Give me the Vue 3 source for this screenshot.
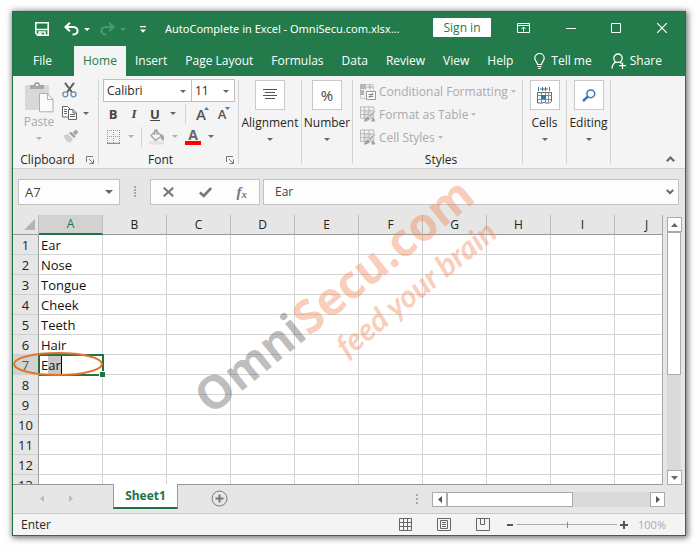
<script setup>
import { ref } from 'vue'

const menus = ['Insert', 'Page Layout', 'Formulas', 'Data', 'Review', 'View', 'Help']
const columns = ['A', 'B', 'C', 'D', 'E', 'F', 'G', 'H', 'I', 'J']
const names = ['Ear', 'Nose', 'Tongue', 'Cheek', 'Teeth', 'Hair']
const rows = Array.from({ length: 13 }, (_, i) => i + 1)
const activeRow = 7
const cellName = ref('A7')
const formula = ref('Ear')
const zoom = ref(50)
</script>

<template>
  <div class="desk">
    <main class="window">
      <header class="titlebar">
        <div class="quick">
          <button class="bare save" aria-label="Save">
            <svg width="14" height="14" viewBox="0 0 14 14" fill="none" stroke="#fff" stroke-width="1.6"><path d="M.8.8h12.4v12.4H2.8l-2-2zM.8 7.5h12.4" /><path d="M4 13v-3h6v3" /><path d="M6 11v2" /></svg>
          </button>
          <button class="bare undo" aria-label="Undo">
            <svg width="15" height="14" viewBox="0 0 15 14" fill="none" stroke="#fff" stroke-width="2"><path d="M6 .8 1.4 5 6 9.2M1.6 5H9q4.6.3 4.6 4Q13.400 12.400 8.500 12.600" /></svg>
          </button>
          <button class="bare more" aria-label="Undo list"><svg width="6" height="3" viewBox="0 0 6 3"><path d="M0 0h6L3 3z" fill="#fff" /></svg></button>
          <button class="bare redo" aria-label="Redo" disabled>
            <svg width="15" height="14" viewBox="0 0 15 14" fill="none" stroke="#4d9a70" stroke-width="2"><path d="M9 .8 13.600 5 9 9.200M13.400 5H6Q1.400 5.300 1.400 9q.2 3.400 5 3.600" /></svg>
          </button>
          <button class="bare more" aria-label="Redo list" disabled><svg width="6" height="3" viewBox="0 0 6 3"><path d="M0 0h6L3 3z" fill="#4d9a70" /></svg></button>
          <button class="bare custom" aria-label="Customize toolbar"><svg width="6" height="7" viewBox="0 0 6 7"><path d="M0 0h6v1.300H0zM0 3.500h6L3 6.700z" fill="#fff" /></svg></button>
        </div>
        <h1>AutoComplete in Excel - OmniSecu.com.xlsx...</h1>
        <button class="signin">Sign in</button>
        <div class="controls">
          <button class="bare" aria-label="Ribbon display options"><svg width="13" height="10" viewBox="0 0 13 10" fill="none" stroke="#fff"><path d="M.5.5h12v9H.5zM.5 2.500h12M6.500 8.500V4M4.500 6l2-2 2 2" /></svg></button>
          <button class="bare" aria-label="Minimize"><svg width="10" height="10" viewBox="0 0 10 10" stroke="#fff"><path d="M0 5.500h10" /></svg></button>
          <button class="bare" aria-label="Maximize"><svg width="10" height="10" viewBox="0 0 10 10" fill="none" stroke="#fff"><path d="M.5.5h9v9h-9z" /></svg></button>
          <button class="bare" aria-label="Close"><svg width="10" height="10" viewBox="0 0 10 10" stroke="#fff" stroke-width="1.200"><path d="m0 0 10 10M10 0 0 10" /></svg></button>
        </div>
      </header>

      <nav class="tabs">
        <button class="tab file">File</button>
        <button class="tab home">Home</button>
        <button v-for="m in menus" :key="m" class="tab">{{ m }}</button>
        <button class="tab tell">
          <svg width="11" height="16" viewBox="0 0 11 16" fill="none" stroke="#fff" stroke-width="1.200"><path d="M3.500 11.500C3.500 9 .8 8 .8 5.200a4.700 4.700 0 0 1 9.400 0C10.200 8 7.500 9 7.500 11.500zM3.500 13.500h4M4.300 15.400h2.400" /></svg>
          Tell me
        </button>
        <button class="tab share">
          <svg width="16" height="17" viewBox="0 0 16 17" fill="none" stroke="#fff" stroke-width="1.300"><circle cx="7" cy="5.200" r="4.200" /><path d="M1 15.500c.2-4 1.600-5.500 4-6.500M9 9l1.500 1.500M11.500 9.500V16M8.200 12.700h6.800" /></svg>
          Share
        </button>
      </nav>

      <section class="ribbon">
        <div class="group clipboard">
          <div class="paste-area">
            <button class="bare paste" disabled>
              <svg width="29" height="31" viewBox="0 0 29 31"><path d="M0 3h24v25H0z" fill="#d9d7d9" /><path d="M5 7V3h4q0-3 3-3t3 3h4v4z" fill="#a7a7a7" /><path d="M11 2h2v2h-2z" fill="#f4f4f4" /><path d="M14.500 11.500h8l5.500 6v12.300H14.500z" fill="#fafafa" stroke="#b0b0b0" /><path d="M22.500 11.500v6H28" fill="none" stroke="#b0b0b0" /></svg>
              <span>Paste</span>
              <svg class="caret faint" width="6" height="3" viewBox="0 0 6 3"><path d="M0 0h6L3 3z" /></svg>
            </button>
            <div class="stack">
              <button class="bare" aria-label="Cut"><svg width="15" height="16" viewBox="0 0 15 16" fill="none"><path d="m3 .8 6.800 9.200M12 .8 5.200 10" stroke="#606060" stroke-width="2" /><circle cx="3.300" cy="12.300" r="2.500" stroke="#6b8cae" stroke-width="1.300" /><circle cx="11.500" cy="12.300" r="2.500" stroke="#6b8cae" stroke-width="1.300" /></svg></button>
              <span class="pair">
                <button class="bare" aria-label="Copy"><svg width="15" height="15" viewBox="0 0 15 15" fill="#fff" stroke="#666"><path d="M.5.5h5l2.500 2.500v8H.5zM2 3.500h3M2 5.500h3M2 7.500h3" /><path d="M6.500 3.500H11l3.500 3.500v6.500h-8z" /><path d="M11 3.500V7h3M8 8.500h5M8 10.500h5" fill="none" /></svg></button>
                <button class="bare" aria-label="Copy options"><svg class="caret" width="6" height="3" viewBox="0 0 6 3"><path d="M0 0h6L3 3z" /></svg></button>
              </span>
              <button class="bare" aria-label="Format painter" disabled><svg width="17" height="14" viewBox="0 0 17 14"><path d="M1 6.500 6 5l5 5-3 4-2-2v2z" fill="#cfcfcf" /><path d="m7 4 1.800-1.200 4.800 4.800L12 9z" fill="#999" /><path d="m10.500 3.500 3.500-3 2.500 2.500-3 3.500z" fill="#a8a8a8" /></svg></button>
            </div>
          </div>
          <div class="caption"><span>Clipboard</span>
            <button class="bare launch" aria-label="Clipboard settings"><svg width="8" height="8" viewBox="0 0 8 8" fill="none" stroke="#777"><path d="M.5 6V.5H7M3 3l4 4M7.500 3.500v4h-4" /></svg></button>
          </div>
        </div>

        <div class="group font">
          <div class="selects">
            <label class="pick name"><select aria-label="Font name"><option>Calibri</option></select><svg class="caret" width="6" height="3" viewBox="0 0 6 3"><path d="M0 0h6L3 3z" /></svg></label>
            <label class="pick size"><select aria-label="Font size"><option>11</option></select><svg class="caret" width="6" height="3" viewBox="0 0 6 3"><path d="M0 0h6L3 3z" /></svg></label>
          </div>
          <div class="tools first">
            <button class="bare letter">B</button>
            <button class="bare letter it">I</button>
            <button class="bare letter un">U</button>
            <button class="bare" aria-label="Underline options"><svg class="caret" width="6" height="3" viewBox="0 0 6 3"><path d="M0 0h6L3 3z" /></svg></button>
            <i class="rule"></i>
            <button class="bare sized big" aria-label="Increase font size">A<svg width="5" height="3" viewBox="0 0 5 3"><path d="M0 3h5L2.500 0z" fill="#3a7fc0" /></svg></button>
            <button class="bare sized small" aria-label="Decrease font size">A<svg width="5" height="3" viewBox="0 0 5 3"><path d="M0 0h5L2.500 3z" fill="#3a7fc0" /></svg></button>
          </div>
          <div class="tools second">
            <button class="bare" aria-label="Borders" disabled><svg width="14" height="14" viewBox="0 0 14 14" fill="none" stroke="#999"><path d="M.5 0v13M6.500 0v13M12.500 0v13M0 .5h13M0 6.500h13" stroke-dasharray="1 1" /><path d="M0 13.300h13" stroke="#777" /></svg></button>
            <button class="bare" aria-label="Border options" disabled><svg class="caret faint" width="6" height="3" viewBox="0 0 6 3"><path d="M0 0h6L3 3z" /></svg></button>
            <i class="rule"></i>
            <button class="bare" aria-label="Fill color" disabled><svg width="16" height="16" viewBox="0 0 16 16" fill="none" stroke="#a5a5a5" stroke-width="1.300"><path d="M2 6.500 7 2l5.500 5-6 4.500z" fill="#f7f7f7" /><path d="M5.500 6V2Q6 0 8 1v5" /><path d="M12 5.500q3.500 1.500 2 5.500-2-1-2-5.500" fill="#a5a5a5" /><path d="M0 12.500h15v3H0z" fill="#e2e2e2" stroke="none" /></svg></button>
            <button class="bare" aria-label="Fill options" disabled><svg class="caret faint" width="6" height="3" viewBox="0 0 6 3"><path d="M0 0h6L3 3z" /></svg></button>
            <button class="bare ink" aria-label="Font color">A</button>
            <button class="bare" aria-label="Font color options"><svg class="caret" width="6" height="3" viewBox="0 0 6 3"><path d="M0 0h6L3 3z" /></svg></button>
          </div>
          <div class="caption"><span>Font</span>
            <button class="bare launch" aria-label="Font settings"><svg width="8" height="8" viewBox="0 0 8 8" fill="none" stroke="#777"><path d="M.5 6V.5H7M3 3l4 4M7.500 3.500v4h-4" /></svg></button>
          </div>
        </div>

        <button class="group folded">
          <span class="tile"><svg width="14" height="12" viewBox="0 0 14 12" stroke="#555"><path d="M0 .5h14M2 3.500h10M0 6.500h14M2 9.500h10" /></svg></span>
          <span>Alignment</span><svg class="caret" width="6" height="3" viewBox="0 0 6 3"><path d="M0 0h6L3 3z" /></svg>
        </button>
        <button class="group folded">
          <span class="tile percent">%</span>
          <span>Number</span><svg class="caret" width="6" height="3" viewBox="0 0 6 3"><path d="M0 0h6L3 3z" /></svg>
        </button>

        <div class="group styles">
          <button class="bare style" disabled>
            <svg width="16" height="16" viewBox="0 0 16 16" fill="none" stroke="#aaa"><path d="M.5.500h13v14H.5z" fill="#eee" stroke="#ccc" /><path d="M0 0h6v5H0zM0 6h4v5H0z" fill="#b5b5b5" stroke="none" /><path d="M7 3h6M10 0v5" /><path d="M6.500 7.500h9v8h-9z" fill="#fff" stroke="#999" /><path d="M8.500 10.500h5M8.500 12.500h5M12.500 9l-3 5" stroke="#888" /></svg>
            Conditional Formatting<svg class="caret faint" width="5" height="3" viewBox="0 0 6 3"><path d="M0 0h6L3 3z" /></svg>
          </button>
          <button v-for="s in ['Format as Table', 'Cell Styles']" :key="s" class="bare style" disabled>
            <svg width="16" height="17" viewBox="0 0 17 17" fill="none" stroke="#b5b5b5"><path d="M.5.500h14v12H.5z" fill="#f3f3f3" /><path d="M4 4h9v8H4z" fill="#ddd" stroke="none" /><path d="M.5 4.500h14M.5 8.500h14M4.500.500v12M9.500.500v12" /><path d="m15.500 4 1 1.500L11 12l-2-2z" fill="#aaa" stroke="#f4f4f4" stroke-width=".7" /><path d="M4 16q1-5 5-5l1.500 2Q9 16 4 16M12 16l1-5 3 3v2z" fill="#a5a5a5" stroke="none" /></svg>
            {{ s }}<svg class="caret faint" width="5" height="3" viewBox="0 0 6 3"><path d="M0 0h6L3 3z" /></svg>
          </button>
          <div class="caption"><span>Styles</span></div>
        </div>

        <button class="group folded">
          <span class="tile"><svg width="15" height="17" viewBox="0 0 15 17" fill="none" stroke="#666"><path d="M1.500 0v4M12.500 0v4M5.500 0v4M8.500 0v4M3 2h8" stroke="#3a7399" /><path d="M.5 5.500h14v9l-2 1.500H8l-1-1-1 1H.5z" fill="#fff" /><path d="M.5 8.500h14M.5 12.500h14M4.500 5.500V16M8.500 5.500V15M11.500 5.500V15" stroke="#888" /><path d="M4 8h5v4H4z" fill="#2e75a8" stroke="none" /></svg></span>
          <span>Cells</span><svg class="caret" width="6" height="3" viewBox="0 0 6 3"><path d="M0 0h6L3 3z" /></svg>
        </button>
        <button class="group folded">
          <span class="tile"><svg width="14" height="13" viewBox="0 0 14 13" fill="none" stroke="#3f74b5"><circle cx="8.800" cy="4.800" r="3.900" stroke-width="1.500" /><path d="m6 7.500-5 4.500" stroke-width="2.400" /></svg></span>
          <span>Editing</span><svg class="caret" width="6" height="3" viewBox="0 0 6 3"><path d="M0 0h6L3 3z" /></svg>
        </button>
        <div class="tail">
          <button class="bare" aria-label="Collapse ribbon"><svg width="9" height="6" viewBox="0 0 9 6" fill="none" stroke="#666" stroke-width="2"><path d="m.8 5.200 3.700-3.700 3.700 3.700" /></svg></button>
        </div>
      </section>

      <section class="formula-bar">
        <label class="namebox"><input v-model="cellName" aria-label="Name box" /><svg class="caret" width="8" height="4" viewBox="0 0 8 4"><path d="M0 0h8L4 4z" /></svg></label>
        <svg class="grip" width="2" height="12" viewBox="0 0 2 12" fill="#aaa"><path d="M0 0h2v2H0zM0 3h2v2H0zM0 6h2v2H0zM0 9h2v2H0z" /></svg>
        <div class="fx-box">
          <button class="bare" aria-label="Cancel"><svg width="11" height="10" viewBox="0 0 11 10" stroke="#777" stroke-width="2"><path d="m.7.700 9.600 8.600M10.300.7.7 9.300" /></svg></button>
          <button class="bare" aria-label="Accept"><svg width="13" height="11" viewBox="0 0 13 11" fill="none" stroke="#777" stroke-width="2.600"><path d="m.8 5.500 4 3.500L12.200 1" /></svg></button>
          <button class="bare fx" aria-label="Insert function">f<small>x</small></button>
        </div>
        <label class="formula"><input v-model="formula" aria-label="Formula" /><svg width="8" height="6" viewBox="0 0 8 6" fill="none" stroke="#666" stroke-width="2"><path d="m.8 1 3.200 3.200L7.200 1" /></svg></label>
      </section>

      <section class="sheet">
        <div class="grid-view">
          <table>
            <thead>
              <tr>
                <th class="corner"><svg width="11" height="11" viewBox="0 0 11 11"><path d="M11 0v11H0z" fill="#b4b4b4" /></svg></th>
                <th v-for="c in columns" :key="c" :class="{ active: c === 'A' }">{{ c }}</th>
              </tr>
            </thead>
            <tbody>
              <tr v-for="r in rows" :key="r">
                <th :class="{ active: r === activeRow }">{{ r }}
                  <svg v-if="r === activeRow" class="ring" width="90" height="24" viewBox="0 0 90 24"><ellipse cx="45" cy="12" rx="44" ry="11" fill="none" stroke="#e0762a" stroke-width="2" /></svg>
                </th>
                <td v-for="c in columns" :key="c" :class="{ editing: r === activeRow && c === 'A' }">
                  <template v-if="c === 'A' && r === activeRow">E<mark>ar</mark></template>
                  <template v-else-if="c === 'A'">{{ names[r - 1] }}</template>
                </td>
              </tr>
            </tbody>
          </table>
        </div>
        <div class="vscroll">
          <button class="arrow" aria-label="Scroll up"><svg width="7" height="4" viewBox="0 0 7 4"><path d="M0 4h7L3.500 0z" fill="#666" /></svg></button>
          <div class="track"><div class="thumb"></div></div>
          <button class="arrow" aria-label="Scroll down"><svg width="7" height="4" viewBox="0 0 7 4"><path d="M0 0h7L3.500 4z" fill="#666" /></svg></button>
        </div>
      </section>

      <section class="sheetbar">
        <button class="bare prev" aria-label="Previous sheet"><svg width="4" height="7" viewBox="0 0 4 7"><path d="M4 0v7L0 3.500z" fill="#bbb" /></svg></button>
        <button class="bare next" aria-label="Next sheet"><svg width="4" height="7" viewBox="0 0 4 7"><path d="M0 0v7l4-3.500z" fill="#bbb" /></svg></button>
        <button class="sheet-tab">Sheet1</button>
        <button class="bare add" aria-label="New sheet"><svg width="17" height="17" viewBox="0 0 17 17" fill="none" stroke="#777"><circle cx="8.500" cy="8.500" r="7.500" /><path d="M8.500 4.500v8M4.500 8.500h8" stroke-width="2" /></svg></button>
        <svg class="grip" width="2" height="11" viewBox="0 0 2 11" fill="#aaa"><path d="M0 0h2v2H0zM0 4h2v2H0zM0 8h2v2H0z" /></svg>
        <div class="hscroll">
          <button class="arrow" aria-label="Scroll left"><svg width="4" height="7" viewBox="0 0 4 7"><path d="M4 0v7L0 3.500z" fill="#555" /></svg></button>
          <div class="track"><div class="thumb"></div></div>
          <button class="arrow" aria-label="Scroll right"><svg width="4" height="7" viewBox="0 0 4 7"><path d="M0 0v7l4-3.500z" fill="#555" /></svg></button>
        </div>
      </section>

      <footer class="status">
        <span class="mode">Enter</span>
        <div class="views">
          <button class="bare" aria-label="Normal view"><svg width="13" height="13" viewBox="0 0 13 13" fill="none" stroke="#666"><path d="M.5.500h12v12H.5zM4.500.500v12M8.500.500v12M.5 4.500h12M.5 8.500h12" /></svg></button>
          <button class="bare" aria-label="Page layout view"><svg width="14" height="13" viewBox="0 0 14 13" fill="none" stroke="#666"><path d="M.5.500h13v12H.5zM3.500 2.500h7v8h-7zM5 4.500h4M5 6.500h4M5 8.500h4" /></svg></button>
          <button class="bare" aria-label="Page break view"><svg width="14" height="13" viewBox="0 0 14 13" fill="none" stroke="#666"><path d="M.5.500h13v12H.5zM4.500.500v6h4v-6M8.500.500v6" /></svg></button>
        </div>
        <button class="bare" aria-label="Zoom out"><svg width="6" height="8" viewBox="0 0 6 8"><path d="M0 3h6v2H0z" fill="#555" /></svg></button>
        <input v-model="zoom" class="slider" type="range" min="0" max="100" aria-label="Zoom" />
        <button class="bare" aria-label="Zoom in"><svg width="8" height="8" viewBox="0 0 8 8"><path d="M0 3h3V0h2v3h3v2H5v3H3V5H0z" fill="#555" /></svg></button>
        <span class="level">100%</span>
      </footer>
    </main>

    <svg class="watermark" width="330" height="260" viewBox="0 0 330 260" aria-hidden="true">
      <text class="brand" transform="translate(31 246) rotate(-39)"><tspan class="gray">Omni</tspan><tspan>Secu.com</tspan></text>
      <text class="slogan" transform="translate(167 189) rotate(-39)">feed your brain</text>
    </svg>
  </div>
</template>

<style>
body { background: #fdfefd; }
</style>

<style scoped>
* { box-sizing: border-box; }
.desk {
  position: relative;
  min-height: 100vh;
  padding: 11px 14px 16px 12px;
  display: flex;
  font-family: "Open Sans", "Noto Sans", sans-serif;
  font-size: 12px;
  line-height: 16px;
  color: #262626;
}
.window {
  flex: 1;
  min-width: 0;
  height: calc(100vh - 27px);
  display: flex;
  flex-direction: column;
  border: 1px solid #217346;
  background: #e6e6e6;
  box-shadow: 1px 1px 6px 1px rgba(0, 0, 0, 0.55);
}
button, input, select { font: inherit; color: inherit; margin: 0; padding: 0; border: 0; background: none; border-radius: 0; }
svg { display: block; flex: none; }
.bare { display: flex; align-items: center; justify-content: center; }
.caret { fill: #666; }
.caret.faint { fill: #b0b0b0; }

.titlebar { height: 34px; flex: none; display: flex; align-items: center; background: #237b4b; color: #fff; padding: 0 18px 0 22px; }
.quick { display: flex; align-items: center; width: 130px; flex: none; }
.undo { margin-left: 15px; }
.more { margin-left: 5px; }
.redo { margin-left: 10px; }
.custom { margin-left: 14px; }
h1 { font: inherit; font-family: "Noto Sans", sans-serif; font-size: 11px; margin: 0; width: 268px; white-space: nowrap; }
.signin { width: 58px; height: 19px; margin-bottom: 3px; background: #fff; color: #237b4b; border-radius: 1px; line-height: 18px; }
.controls { flex: 1; display: flex; justify-content: space-between; padding-left: 26px; margin-bottom: 2px; }

.tabs { height: 30px; flex: none; display: flex; background: #237b4b; color: #fff; padding: 0 14px 0 11px; }
.tab { padding: 0 9px; white-space: nowrap; display: flex; align-items: center; gap: 6px; }
.file { margin-right: 13px; }
.home { background: #f4f4f4; color: #237b4b; }
.tell { padding-left: 12px; }
.share { margin-left: auto; gap: 3px; }

.ribbon { flex: none; height: 93px; display: grid; grid-template-columns: 86px 140px 63px 51px 170px 44px 44px 1fr; background: #f4f4f4; border-bottom: 1px solid #cfcfcf; padding: 4px 0; }
.group { border-right: 1px solid #d2d2d2; display: flex; flex-direction: column; min-width: 0; }
.caption { position: relative; margin: auto 0 -4px; height: 16px; display: flex; justify-content: center; align-items: center; }
.clipboard .caption { padding-right: 16px; }
.launch { position: absolute; right: 4px; top: 4px; }
.paste-area { display: flex; gap: 8px; padding: 2px 0 0 11px; }
.paste { flex-direction: column; color: #aaa; width: 30px; justify-content: flex-start; }
.paste span { line-height: 18px; }
.paste .caret { margin-top: 6px; }
.stack { display: flex; flex-direction: column; align-items: flex-start; gap: 8px; }
.pair { display: flex; gap: 6px; }

.font { padding: 0 4px; }
.font .caption { margin: auto -4px -4px; padding-right: 16px; }
.selects { display: grid; grid-template-columns: 89px 43px; margin-top: -1px; }
.pick { position: relative; height: 23px; border: 1px solid #c0c0c0; background: #fff; display: flex; align-items: center; }
.size { border-left: 0; }
.pick select { appearance: none; width: 100%; padding-left: 3px; outline: 0; }
.pick .caret { position: absolute; right: 5px; top: 10px; pointer-events: none; }
.tools { display: flex; align-items: center; height: 23px; }
.rule { width: 1px; height: 20px; flex: none; background: #d2d2d2; }
.letter { width: 12px; font-weight: 700; font-size: 13px; color: #444; }
.it { font-family: "Liberation Serif", serif; font-style: italic; }
.un { text-decoration: underline; }
.first { gap: 9px; padding-left: 4px; }
.sized { position: relative; font-weight: 600; color: #555; width: 12px; }
.sized svg { position: absolute; right: -2px; top: 1px; }
.big { font-size: 15px; }
.small { font-size: 13px; }
.second { gap: 7px; padding-left: 4px; }
.ink { width: 16px; height: 16px; font-weight: 700; font-size: 14px; line-height: 13px; color: #666; border-bottom: 4px solid #f00; }

.folded { align-items: center; white-space: nowrap; }
.tile { width: 30px; height: 30px; border: 1px solid #c9c9c9; background: #fff; display: flex; align-items: center; justify-content: center; margin-bottom: 5px; }
.folded > .caret { margin-top: 7px; }
.percent { font-size: 15px; color: #444; }

.styles { padding-left: 7px; }
.style { height: 23px; justify-content: flex-start; gap: 3px; color: #aaa; white-space: nowrap; }
.tail { display: flex; align-items: flex-end; justify-content: flex-end; padding: 0 10px 2px 0; }

.formula-bar { flex: none; display: flex; align-items: center; height: 46px; padding: 10px 6px 10px 5px; }
.namebox, .fx-box, .formula { height: 26px; border: 1px solid #c3c3c3; background: #fdfdfd; display: flex; align-items: center; color: #444; }
.namebox { width: 102px; padding: 0 6px; flex: none; font-size: 13px; }
.namebox input { width: 100%; min-width: 0; }
.grip { margin: 0 14px; }
.fx-box { width: 110px; padding: 0 12px; justify-content: space-between; flex: none; }
.fx { font: italic 700 15px/16px "Liberation Serif", serif; color: #777; }
.fx small { font-size: 11px; padding-top: 3px; }
.formula { flex: 1; margin-left: 3px; padding: 0 4px 0 11px; }
.formula input { flex: 1; min-width: 0; }

.sheet { flex: 1; min-height: 0; display: flex; }
.grid-view { flex: 1; min-width: 0; overflow: hidden; position: relative; border-bottom: 1px solid #999; }
table { border-collapse: separate; border-spacing: 0; table-layout: fixed; width: 666px; }
th { width: 64px; height: 20px; padding: 0; font-weight: 400; background: #e6e6e6; border-right: 1px solid #bbb; border-bottom: 1px solid #999; color: #222; }
td { height: 20px; padding: 0 2px; border-right: 1px solid #d4d4d4; border-bottom: 1px solid #d4d4d4; background: #fff; color: #111; font-size: 13px; line-height: 16px; white-space: nowrap; }
.corner { width: 26px; }
.corner svg { margin-left: 11px; }
thead .active { background: #d2d2d2; color: #217346; border-bottom: 2px solid #217346; }
tbody th { position: relative; border-right-color: #999; border-bottom-color: #cfcfcf; font-size: 13px; line-height: 16px; }
tbody .active { background: #d2d2d2; color: #217346; }
.ring { position: absolute; left: 0; top: -3px; z-index: 2; }
.editing { position: relative; outline: 2px solid #217346; outline-offset: -1px; }
.editing::after { content: ""; position: absolute; right: -3px; bottom: -3px; width: 5px; height: 5px; background: #217346; border: 1px solid #fff; border-width: 1px 0 0 1px; }
mark { background: #c8c8c8; color: inherit; border-right: 1px solid #000; }
.vscroll { width: 23px; flex: none; display: flex; flex-direction: column; padding: 2px 4px 0; border-left: 1px solid #aaa; }
.arrow { width: 15px; height: 15px; flex: none; display: flex; align-items: center; justify-content: center; background: #fff; border: 1px solid #aaa; }
.track { flex: 1; background: #dadada; }
.thumb { background: #fff; border: 1px solid #aaa; }
.vscroll .thumb { height: 60%; }

.sheetbar { flex: none; height: 28px; display: flex; align-items: flex-start; padding: 0 20px 0 27px; }
.prev, .next { margin-top: 10px; }
.next { margin-left: 25px; }
.sheet-tab { width: 65px; height: 25px; margin: -1px 0 0 40px; background: #fff; color: #217346; font-weight: 700; border: 1px solid #999; border-top: 0; border-bottom: 2px solid #217346; position: relative; }
.add { margin: 5px auto 0 33px; }
.sheetbar .grip { margin-top: 9px; }
.hscroll { display: flex; width: 233px; margin-top: 7px; }
.hscroll .thumb { width: 62%; height: 15px; }

.status { flex: none; height: 22px; display: flex; align-items: center; background: #f4f4f4; border-top: 1px solid #c8c8c8; padding: 0 19px 0 8px; }
.views { display: flex; gap: 25px; margin: 0 17px 0 auto; }
.slider { appearance: none; width: 100px; height: 8px; margin: 0 3px 0 4px; background: linear-gradient(#aaa, #aaa) center / 100% 1px no-repeat; }
.slider::-webkit-slider-thumb { appearance: none; width: 1px; height: 6px; background: #888; }
.level { color: #aaa; margin-left: 10px; font-size: 11px; }

.watermark { position: absolute; left: 180px; top: 170px; pointer-events: none; z-index: 3; overflow: visible; fill: rgba(240, 125, 75, 0.4); }
.brand { font-size: 46px; font-weight: 700; }
.gray { fill: rgba(95, 95, 95, 0.42); }
.slogan { font-family: Lato, sans-serif; font-style: italic; font-weight: 700; font-size: 31px; }
</style>
